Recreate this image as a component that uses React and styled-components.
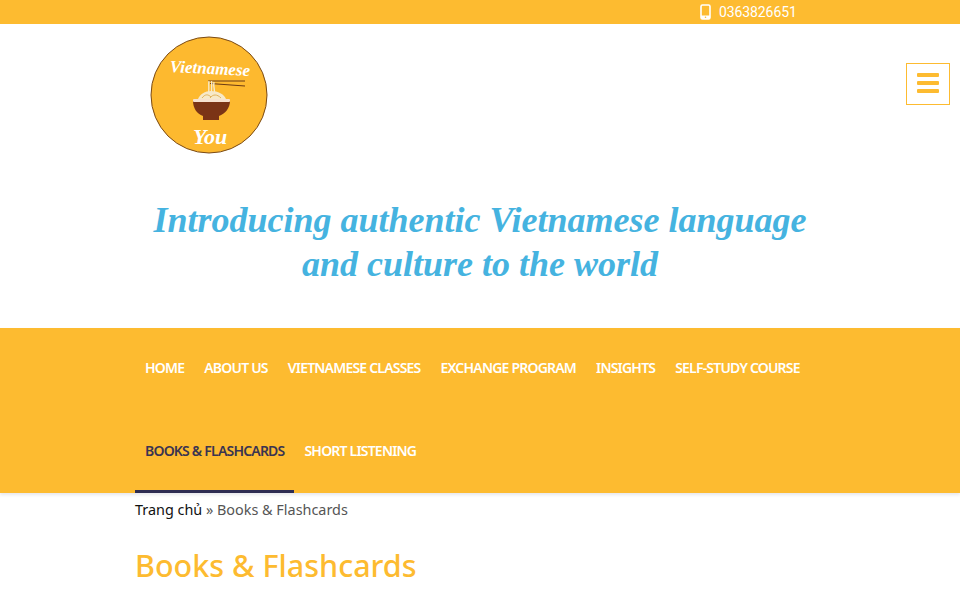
import React from 'react';
import styled, { createGlobalStyle } from 'styled-components';

const amber = '#fdbb30';

const GlobalStyle = createGlobalStyle`
  html, body {
    margin: 0;
    padding: 0;
    background: #fff;
    overflow: hidden;
    font-family: "Noto Sans", "Open Sans", sans-serif;
  }
  * { box-sizing: border-box; }
`;

const Page = styled.div`
  width: 960px;
  height: 600px;
  overflow: hidden;
`;

const TopBar = styled.div`
  height: 24px;
  background: ${amber};
  display: flex;
  align-items: center;
  padding-left: 700px;
  gap: 8px;
  color: #fff;
  font-family: Roboto, sans-serif;
  font-size: 14px;
  letter-spacing: -0.1px;
`;

const Header = styled.header`
  height: 304px;
  padding-top: 12px;
`;

const HeaderRow = styled.div`
  display: flex;
  justify-content: space-between;
  align-items: flex-start;
  padding: 0 10px 0 150px;
  height: 162px;
`;

const Toggle = styled.button`
  width: 44px;
  height: 42px;
  margin-top: 27px;
  padding: 0 0 2px;
  background: #fff;
  border: 1px solid ${amber};
  display: flex;
  flex-direction: column;
  align-items: center;
  justify-content: center;
  gap: 4px;
`;

const ToggleBar = styled.span`
  width: 22px;
  height: 4px;
  background: ${amber};
  border-radius: 1px;
`;

const Tagline = styled.h2`
  margin: 0;
  text-align: center;
  color: #45b3e0;
  font-family: "Liberation Serif", serif;
  font-style: italic;
  font-weight: 700;
  font-size: 36px;
  line-height: 44px;
`;

const Nav = styled.nav`
  height: 165px;
  background: ${amber};
  padding-left: 135px;
  box-shadow: 0 2px 3px rgba(60, 60, 90, 0.12);
`;

const NavRow = styled.ul`
  list-style: none;
  margin: 0;
  padding: 0;
  height: 82.5px;
  display: flex;
`;

const NavItem = styled.li`
  height: 100%;
  padding: 0 10px;
  display: flex;
  align-items: center;
  color: ${(p) => (p.$active ? '#3a3450' : '#fff')};
  border-bottom: 3px solid ${(p) => (p.$active ? '#2f2d52' : 'transparent')};
  font-size: 14px;
  font-weight: 600;
  letter-spacing: -0.8px;
  white-space: nowrap;
`;

const Main = styled.main`
  padding-left: 135px;
`;

const Crumbs = styled.div`
  margin-top: 7px;
  font-size: 14.4px;
  line-height: 20px;
  color: #555;
`;

const CrumbLink = styled.a`
  color: #111;
`;

const Title = styled.h1`
  margin: 25px 0 0;
  color: ${amber};
  font-size: 30.5px;
  line-height: 40px;
  font-weight: 500;
`;

const PhoneIcon = () => (
  <svg width="11" height="16" viewBox="0 0 11 16">
    <rect x="1" y="1" width="9" height="14" rx="1.5" fill="none" stroke="#fff" strokeWidth="1.6" />
    <rect x="1" y="11.5" width="9" height="3.5" fill="#fff" />
    <circle cx="5.5" cy="13.2" r="0.8" fill={amber} />
  </svg>
);

const Logo = () => (
  <svg width="118" height="118" viewBox="0 0 118 118">
    <circle cx="59" cy="59" r="58" fill="#fdb92f" stroke="#7a4a16" strokeWidth="1" />
    <text x="60" y="38" textAnchor="middle" fill="#fff" fontFamily="Liberation Serif, serif" fontStyle="italic" fontWeight="700" fontSize="17" transform="rotate(3 60 32)">Vietnamese</text>
    <path d="M58 45H95M60 47.5L95 50" stroke="#6b3a14" strokeWidth="1" fill="none" />
    <path d="M59 45C58 50 60 54 58 58M61.5 45C62.5 50 60.5 54 62 58M64 46C63 50 65 54 64.5 58" stroke="#f7e9c9" strokeWidth="1.4" fill="none" />
    <path d="M48 63C50 58 55 55 61 55C68 55 74 58 76 63Z" fill="#f7e9c9" />
    <path d="M52 62C55 58 58 58 61 61M60 62C63 58 67 58 71 62" stroke="#d9a441" strokeWidth="0.8" fill="none" />
    <path d="M43 65H80C80 72 75 78 69 80V84H53V80C47 78 43 72 43 65Z" fill="#7b3416" />
    <rect x="43" y="63" width="37" height="3" rx="1" fill="#f7e2cf" />
    <text x="60" y="108" textAnchor="middle" fill="#fff" fontFamily="Liberation Serif, serif" fontStyle="italic" fontWeight="700" fontSize="22">You</text>
  </svg>
);

const topNav = ['HOME', 'ABOUT US', 'VIETNAMESE CLASSES', 'EXCHANGE PROGRAM', 'INSIGHTS', 'SELF-STUDY COURSE'];

export default function App() {
  return (
    <Page>
      <GlobalStyle />
      <TopBar>
        <PhoneIcon />
        <span>0363826651</span>
      </TopBar>
      <Header>
        <HeaderRow>
          <Logo />
          <Toggle aria-label="menu">
            <ToggleBar />
            <ToggleBar />
            <ToggleBar />
          </Toggle>
        </HeaderRow>
        <Tagline>
          Introducing authentic Vietnamese language
          <br />
          and culture to the world
        </Tagline>
      </Header>
      <Nav>
        <NavRow>
          {topNav.map((item) => (
            <NavItem key={item}>{item}</NavItem>
          ))}
        </NavRow>
        <NavRow>
          <NavItem $active>BOOKS &amp; FLASHCARDS</NavItem>
          <NavItem>SHORT LISTENING</NavItem>
        </NavRow>
      </Nav>
      <Main>
        <Crumbs>
          <CrumbLink>Trang chủ</CrumbLink> » Books &amp; Flashcards
        </Crumbs>
        <Title>Books &amp; Flashcards</Title>
      </Main>
    </Page>
  );
}
